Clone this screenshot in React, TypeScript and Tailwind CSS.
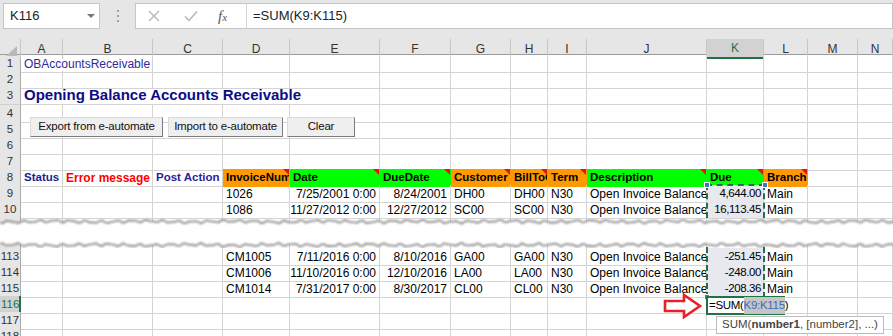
import React from 'react';

type Cell = { t?: React.ReactNode; cls?: string; b?: string; span?: number; r?: boolean; tri?: boolean };

const GRID = 'grid grid-cols-[21px_42px_90px_70px_67px_90px_71px_60px_37px_39px_120px_57px_44px_50px_35px]';
const SPAN: Record<number, string> = { 2: 'col-span-2', 5: 'col-span-5' };
const WIDTHS = [21, 42, 90, 70, 67, 90, 71, 60, 37, 39, 120, 57, 44, 50, 35];
const LETTERS = ['A', 'B', 'C', 'D', 'E', 'F', 'G', 'H', 'I', 'J', 'K', 'L', 'M', 'N'];

const ORANGE = { cls: 'bg-[#ff9900] font-bold text-[11.5px] text-black', b: 'border-[#ff9900]', tri: true };
const GREEN = { cls: 'bg-[#00ff00] font-bold text-[11.5px] text-black', b: 'border-[#00ff00]', tri: true };
const SELK = 'bg-[#e7e9ef] text-[11.5px] !pr-[2px] tracking-[-0.4px]';

function Row({ n, cells = {}, h = 'h-[16px]', active = false }: { n: number; cells?: Record<number, Cell>; h?: string; active?: boolean }) {
  const out: React.ReactNode[] = [];
  for (let i = 0; i < 14; ) {
    const c = cells[i] ?? {};
    out.push(
      <div
        key={i}
        className={`relative flex items-center overflow-hidden whitespace-nowrap border-r border-b px-[3px] ${c.b ?? 'border-[#d4d4d4]'} ${c.span ? SPAN[c.span] : ''} ${c.r ? 'justify-end' : ''} ${c.cls ?? ''}`}
      >
        {c.t}
        {c.tri && <span className="absolute right-0 top-0 h-0 w-0 border-l-[6px] border-t-[6px] border-l-transparent border-t-[#e81010]" />}
      </div>
    );
    i += c.span ?? 1;
  }
  return (
    <div className={`${GRID} ${h} text-[12px] text-black`}>
      {active ? (
        <div className="flex items-center border-b border-r-2 border-b-[#c6c6c6] border-r-[#217346] bg-[#d2d2d2] pl-[1px] text-[11.5px] text-[#217346]">{n}</div>
      ) : (
        <div className="flex items-center justify-center border-b border-r border-b-[#d0d0d0] border-r-[#ababab] bg-[#e6e6e6] text-[11.5px] text-[#333]">{n}</div>
      )}
      {out}
    </div>
  );
}

function dataCells(inv: string, date: string, due: string, cust: string, term: string, amt: string): Record<number, Cell> {
  return {
    3: { t: inv },
    4: { t: date, r: true },
    5: { t: due, r: true },
    6: { t: cust },
    7: { t: cust },
    8: { t: term },
    9: { t: 'Open Invoice Balance' },
    10: { t: amt, r: true, cls: SELK },
    11: { t: 'Main' },
  };
}

function jag(y0: number, seed: number) {
  const pts: string[] = [];
  for (let x = 0; x <= 896; x += 3) {
    const y = y0 + 1.1 * Math.sin(x * 0.41 + seed) + 0.7 * Math.sin(x * 1.37 + seed * 3) + 0.5 * Math.sin(x * 0.07 + seed);
    pts.push(`${x} ${y.toFixed(2)}`);
  }
  return pts;
}

function Tear() {
  const top = jag(4.5, 1);
  const bot = jag(28, 4);
  let acc = 0;
  const xs = WIDTHS.map((w) => (acc += w) - 0.5);
  const band = `M${top.join(' L')} L${[...bot].reverse().join(' L')} Z`;
  return (
    <div className="h-[31px] bg-white">
      <svg width="893" height="31" className="block">
        <defs>
          <filter id="soft" x="-5%" y="-200%" width="110%" height="500%">
            <feGaussianBlur stdDeviation="0.8" />
          </filter>
        </defs>
        <rect x="0" y="0" width="21" height="31" fill="#e6e6e6" />
        {xs.map((x, i) => (
          <line key={i} x1={x} x2={x} y1="0" y2="31" stroke={i === 0 ? '#ababab' : '#d4d4d4'} />
        ))}
        <path d={band} fill="#fff" />
        <path d={`M${top.join(' L')}`} fill="none" stroke="#8a8a8a" strokeWidth="1.8" filter="url(#soft)" />
        <path d={`M${bot.join(' L')}`} fill="none" stroke="#8a8a8a" strokeWidth="1.8" filter="url(#soft)" />
      </svg>
    </div>
  );
}

function Btn({ label, cls }: { label: string; cls: string }) {
  return (
    <div className={`absolute flex h-[20px] items-center justify-center whitespace-nowrap border border-[#dadada] border-b-[#7c7c7c] border-r-[#7c7c7c] bg-[#efefef] text-[11.5px] tracking-[-0.2px] text-[#111] ${cls}`}>
      {label}
    </div>
  );
}

export default function App() {
  return (
    <div className="relative h-[336px] w-[893px] overflow-hidden bg-white font-['Liberation_Sans',Arial,sans-serif]">
      {/* formula bar */}
      <div className="flex h-[39px] items-start bg-[#e6e6e6] pl-[3px] pt-[3px]">
        <div className="flex h-[26px] w-[97px] items-center justify-between border border-[#c6c6c6] bg-white pl-[6px] pr-[4px] text-[13px] text-[#222]">
          K116
          <span className="h-0 w-0 border-x-[4px] border-t-[4px] border-x-transparent border-t-[#777]" />
        </div>
        <div className="flex w-[35px] flex-col items-center gap-[3px] pt-[7px]">
          <span className="h-[2px] w-[2px] bg-[#a0a0a0]" />
          <span className="h-[2px] w-[2px] bg-[#a0a0a0]" />
          <span className="h-[2px] w-[2px] bg-[#a0a0a0]" />
        </div>
        <div className="flex h-[26px] flex-1 border border-[#c6c6c6] bg-white">
          <div className="flex w-[110px] items-center">
            <svg width="12" height="12" className="ml-[12px]" viewBox="0 0 12 12">
              <path d="M1 1 L11 11 M11 1 L1 11" stroke="#b4b4b4" strokeWidth="1.3" />
            </svg>
            <svg width="14" height="12" className="ml-[24px]" viewBox="0 0 14 12">
              <path d="M1 6.5 L5 10.5 L13 1.5" stroke="#b4b4b4" strokeWidth="1.4" fill="none" />
            </svg>
            <span className="ml-[20px] font-['Liberation_Serif',serif] text-[15px] italic text-[#555]">
              f<span className="text-[11px]">x</span>
            </span>
          </div>
          <div className="flex items-center border-l border-[#d6d6d6] pl-[6px] text-[13px] text-[#222]">=SUM(K9:K115)</div>
        </div>
      </div>

      {/* column headers */}
      <div className={`${GRID} h-[16px] border-b border-[#9b9b9b] bg-[#e6e6e6] text-[12px] text-[#333]`}>
        <div className="relative border-r border-[#c6c6c6]">
          <svg width="13" height="11" className="absolute bottom-[2px] right-[2px]">
            <polygon points="12,0 12,10 1,10" fill="#b9b9b9" />
          </svg>
        </div>
        {LETTERS.map((l) =>
          l === 'K' ? (
            <div key={l} className="flex items-center justify-center border-b-2 border-r border-b-[#217346] border-r-[#c6c6c6] bg-[#d2d2d2] text-[#217346]">
              {l}
            </div>
          ) : (
            <div key={l} className="flex items-center justify-center border-r border-[#c6c6c6]">
              {l}
            </div>
          )
        )}
      </div>

      <Row n={1} cells={{ 0: { t: 'OBAccountsReceivable', span: 2, cls: 'text-[12px] text-[#2b2b9e]' } }} />
      <Row n={2} />
      <Row n={3} h="h-[18px]" cells={{ 0: { t: 'Opening Balance Accounts Receivable', span: 5, cls: 'text-[15px] font-bold text-[#0c0c86]' } }} />
      <Row n={4} />
      <Row n={5} />
      <Row n={6} />
      <Row n={7} />
      <Row
        n={8}
        cells={{
          0: { t: 'Status', cls: 'font-bold text-[11.5px] text-[#1c1c8c]' },
          1: { t: 'Error message', cls: 'font-bold text-[12px] text-[#ff0000]' },
          2: { t: 'Post Action', cls: 'font-bold text-[11.5px] text-[#2a1c9c]' },
          3: { t: 'InvoiceNum', ...ORANGE },
          4: { t: 'Date', ...GREEN },
          5: { t: 'DueDate', ...GREEN },
          6: { t: 'Customer', ...ORANGE },
          7: { t: 'BillToC', ...ORANGE },
          8: { t: 'Term', ...ORANGE },
          9: { t: 'Description', ...GREEN },
          10: { t: 'Due', ...GREEN },
          11: { t: 'Branch', ...ORANGE },
        }}
      />
      <Row n={9} cells={dataCells('1026', '7/25/2001 0:00', '8/24/2001', 'DH00', 'N30', '4,644.00')} />
      <Row n={10} cells={dataCells('1086', '11/27/2012 0:00', '12/27/2012', 'SC00', 'N30', '16,113.45')} />
      <Tear />
      <Row n={113} cells={dataCells('CM1005', '7/11/2016 0:00', '8/10/2016', 'GA00', 'N30', '-251.45')} />
      <Row n={114} cells={dataCells('CM1006', '11/10/2016 0:00', '12/10/2016', 'LA00', 'N30', '-248.00')} />
      <Row n={115} cells={dataCells('CM1014', '7/31/2017 0:00', '8/30/2017', 'CL00', 'N30', '-208.36')} />
      <Row n={116} active />
      <Row n={117} />
      <Row n={118} />

      {/* sheet buttons */}
      <Btn label="Export from e-automate" cls="left-[30px] top-[117px] w-[133px]" />
      <Btn label="Import to e-automate" cls="left-[168px] top-[117px] w-[115px]" />
      <Btn label="Clear" cls="left-[287px] top-[117px] w-[68px]" />

      {/* copy marquee around K9:K115 */}
      <div className="absolute left-[706px] top-[184px] h-[34px] w-[59px] border-x-2 border-t-2 border-dashed border-[#217346]" />
      <div className="absolute left-[706px] top-[247px] h-[51px] w-[59px] border-x-2 border-b-2 border-dashed border-[#217346]" />
      <span className="absolute left-[704px] top-[182px] h-[6px] w-[6px] border border-white bg-[#3f73c6]" />
      <span className="absolute left-[762px] top-[182px] h-[6px] w-[6px] border border-white bg-[#3f73c6]" />
      <span className="absolute left-[704px] top-[294px] h-[6px] w-[6px] border border-white bg-[#3f73c6]" />

      {/* editing cell K116 */}
      <div className="absolute left-[706px] top-[296px] flex h-[19px] w-[79px] items-center whitespace-nowrap border-2 border-[#217346] bg-white pl-[1px] text-[11.5px] tracking-[-0.3px] text-black">
        =SUM(<span className="bg-[#c6c6c6] text-[#3a6cc0]">K9:K115</span>)
      </div>

      {/* red arrow */}
      <svg width="40" height="26" className="absolute left-[663px] top-[293px]" viewBox="0 0 40 26">
        <path d="M2 8 H21 V2 L37 13 L21 24 V18 H2 Z" fill="#fff" stroke="#e8202a" strokeWidth="2.6" strokeLinejoin="miter" />
      </svg>

      {/* function tooltip */}
      <div className="absolute left-[716px] top-[316px] flex h-[18px] w-[168px] items-center whitespace-nowrap border border-[#bdbdbd] bg-white pl-[5px] text-[11.5px] text-[#444]">
        SUM(<b>number1</b>, [number2], ...)
      </div>
    </div>
  );
}
